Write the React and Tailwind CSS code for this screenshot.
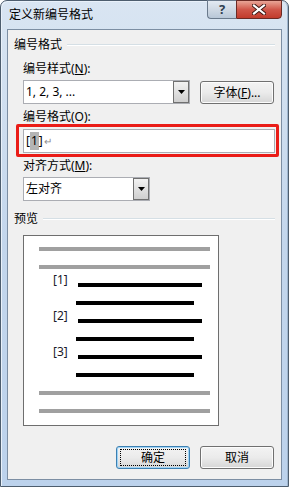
import React from 'react';

const font = "font-['Noto_Sans','Noto_Sans_CJK_SC',sans-serif]";

const DropArrow = () => (
  <div className="w-[16px] h-full border border-[#707070] bg-gradient-to-b from-[#f2f2f2] to-[#cfcfcf] flex items-center justify-center">
    <svg width="7" height="4" viewBox="0 0 7 4">
      <path d="M0 0h7L3.5 4z" fill="#000" />
    </svg>
  </div>
);

const Combo = ({ value, width }) => (
  <div className={`h-[24px] ${width} border border-[#abadb3] bg-white flex items-stretch`}>
    <div className="flex-1 flex items-center pl-[2px] text-[12px] text-black">{value}</div>
    <div className="py-[0px]">
      <DropArrow />
    </div>
  </div>
);

const Btn = ({ children, primary }) => (
  <div
    className={`w-[74px] h-[23px] rounded-[3px] border flex items-center justify-center text-[12px] text-black bg-gradient-to-b from-[#f3f3f3] via-[#ebebeb] to-[#d6d6d6] ${
      primary ? 'border-[#3c7fb1] shadow-[inset_0_0_0_1px_#9fd4f7]' : 'border-[#707070] shadow-[inset_0_0_0_1px_#fcfcfc]'
    }`}
  >
    {primary ? (
      <div className="w-[66px] h-[17px] border border-dotted border-black flex items-center justify-center">{children}</div>
    ) : (
      children
    )}
  </div>
);

const GroupHead = ({ text }) => (
  <div className="h-[16px] flex items-center pl-[6px] pr-[6px]">
    <span className="text-[12px] leading-[16px] text-black">{text}</span>
    <div className="flex-1 ml-[5px] flex flex-col">
      <div className="h-[1px] bg-[#d5dfe5]" />
      <div className="h-[1px] bg-white" />
    </div>
  </div>
);

const Label = ({ children, className = '' }) => (
  <div className={`h-[16px] leading-[16px] pl-[15px] text-[12px] text-black ${className}`}>{children}</div>
);

const Gray = () => <div className="h-[4px] w-[171px] ml-[15px] bg-[#a0a0a0]" />;

const Item = ({ n }) => (
  <>
    <div className="h-[4px] flex items-end">
      <span className="ml-[29px] w-[25px] h-[14px] leading-[14px] text-[12px] text-[#1a1a2a] shrink-0">[{n}]</span>
      <div className="h-[4px] w-[124px] bg-black" />
    </div>
    <div className="h-[4px] w-[118px] ml-[52px] bg-black" />
  </>
);

export default function App() {
  return (
    <div className={`w-[289px] h-[487px] ${font} flex flex-col border border-[#4d5d6e] rounded-t-[7px] bg-gradient-to-b from-[#d9e5f2] via-[#c3d6ec] to-[#bcd2ec] px-[6px] pb-[6px] shadow-[inset_1px_1px_0_#e9f1fa,inset_-1px_0_0_#9fb6cf]`}>
      {/* Title bar */}
      <div className="h-[28px] flex items-start justify-between">
        <div className="pl-[2px] pt-[6px] text-[12px] leading-[16px] text-black">定义新编号格式</div>
        <div className="flex -mt-[1px]">
          <div className="w-[29px] h-[19px] rounded-bl-[4px] border border-[#6a7a8c] border-r-0 bg-gradient-to-b from-[#e3eaf2] via-[#cfd9e4] to-[#b8c7d7] flex items-center justify-center text-[13px] font-bold text-[#2e3e50] leading-none">
            ?
          </div>
          <div className="w-[46px] h-[19px] rounded-br-[4px] border border-[#6b2a24] bg-gradient-to-b from-[#e8a597] via-[#d0574a] to-[#c23b2c] flex items-center justify-center">
            <svg width="14" height="11" viewBox="0 0 14 11">
              <path d="M2 1.5l10 8M12 1.5l-10 8" stroke="#3a1510" strokeWidth="4" strokeLinecap="square" />
              <path d="M2 1.5l10 8M12 1.5l-10 8" stroke="#fff" strokeWidth="2.2" strokeLinecap="square" />
            </svg>
          </div>
        </div>
      </div>

      {/* Client area */}
      <div className="flex-1 border border-[#7c8ea3] bg-[#f0f0f0] flex flex-col pt-[7px]">
        <GroupHead text="编号格式" />
        <Label className="mt-[8px]">
          编号样式(<span className="underline">N</span>):
        </Label>
        <div className="mt-[3px] pl-[15px] flex items-start">
          <Combo value="1, 2, 3, ..." width="w-[167px]" />
          <div className="ml-[10px] mt-[1px]">
            <Btn>
              字体(<span className="underline">F</span>)...
            </Btn>
          </div>
        </div>
        <Label className="mt-[5px]">编号格式(O):</Label>
        <div className="-mt-[1px] ml-[8px] w-[263px] border-[3px] border-[#ea1c17] rounded-[2px] pt-[2px] pl-[4px] pr-[1px] pb-[1px]">
          <div className="h-[24px] border border-[#abadb3] bg-white flex items-center pl-[2px] text-[12px] text-black">
            <span>[</span>
            <span className="bg-[#b4b4b4] px-[1px]">1</span>
            <span>]</span>
            <span className="text-[10px] text-[#8c8c8c] ml-[1px]">↵</span>
          </div>
        </div>
        <Label className="mt-[1px]">
          对齐方式(<span className="underline">M</span>):
        </Label>
        <div className="mt-[3px] pl-[15px]">
          <Combo value="左对齐" width="w-[127px]" />
        </div>
        <div className="mt-[10px]">
          <GroupHead text="预览" />
        </div>
        <div className="mt-[8px] ml-[15px] w-[196px] h-[191px] border border-[#6e6e6e] bg-white flex flex-col gap-[14px] pt-[11px]">
          <Gray />
          <Gray />
          <Item n={1} />
          <Item n={2} />
          <Item n={3} />
          <Gray />
          <Gray />
        </div>
        <div className="mt-[20px] flex justify-end gap-[10px] pr-[7px]">
          <Btn primary>确定</Btn>
          <Btn>取消</Btn>
        </div>
      </div>
    </div>
  );
}
